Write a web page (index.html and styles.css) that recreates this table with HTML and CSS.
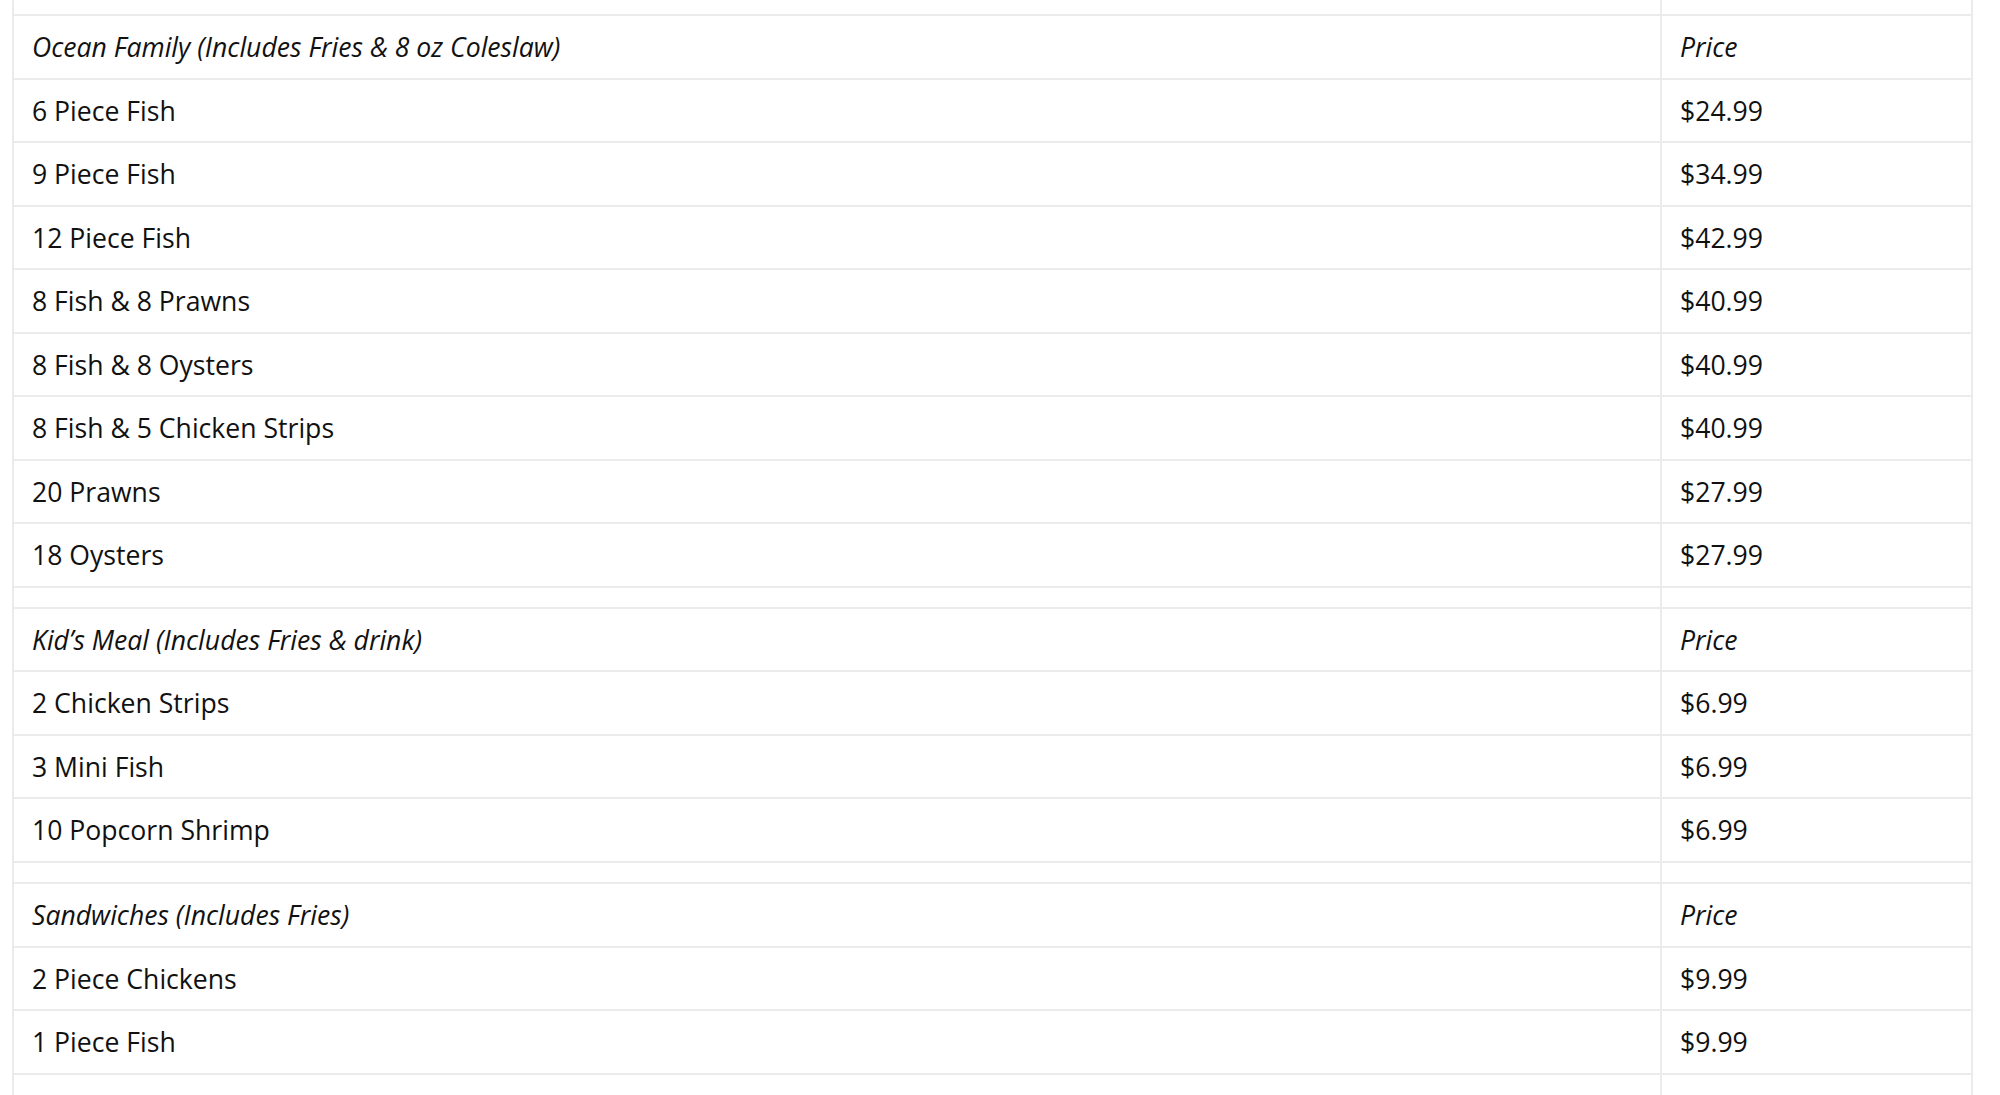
FILE: index.html
```html
<!DOCTYPE html>
<html lang="en">
<head>
<meta charset="utf-8">
<title>Menu</title>
<link rel="stylesheet" href="styles.css">
</head>
<body>
<div class="page">
  <table class="menu">
    <tbody>
      <tr class="row-cut"><td></td><td></td></tr>
      <tr class="row-head"><td>Ocean Family (Includes Fries &amp; 8 oz Coleslaw)</td><td>Price</td></tr>
      <tr><td>6 Piece Fish</td><td>$24.99</td></tr>
      <tr><td>9 Piece Fish</td><td>$34.99</td></tr>
      <tr><td>12 Piece Fish</td><td>$42.99</td></tr>
      <tr><td>8 Fish &amp; 8 Prawns</td><td>$40.99</td></tr>
      <tr><td>8 Fish &amp; 8 Oysters</td><td>$40.99</td></tr>
      <tr><td>8 Fish &amp; 5 Chicken Strips</td><td>$40.99</td></tr>
      <tr><td>20 Prawns</td><td>$27.99</td></tr>
      <tr><td>18 Oysters</td><td>$27.99</td></tr>
      <tr class="row-gap"><td></td><td></td></tr>
      <tr class="row-head"><td>Kid’s Meal (Includes Fries &amp; drink)</td><td>Price</td></tr>
      <tr><td>2 Chicken Strips</td><td>$6.99</td></tr>
      <tr><td>3 Mini Fish</td><td>$6.99</td></tr>
      <tr><td>10 Popcorn Shrimp</td><td>$6.99</td></tr>
      <tr class="row-gap"><td></td><td></td></tr>
      <tr class="row-head"><td>Sandwiches (Includes Fries)</td><td>Price</td></tr>
      <tr><td>2 Piece Chickens</td><td>$9.99</td></tr>
      <tr><td>1 Piece Fish</td><td>$9.99</td></tr>
      <tr><td>&nbsp;</td><td>&nbsp;</td></tr>
    </tbody>
  </table>
</div>
</body>
</html>
```
FILE: styles.css
```css
html, body {
  margin: 0;
  padding: 0;
  background: #ffffff;
}

body {
  font-family: "Open Sans", "Noto Sans", sans-serif;
  color: #111111;
  height: 1095px;
  overflow: hidden;
}

.page {
  padding-left: 12px;
}

.menu {
  border-collapse: separate;
  border-spacing: 0;
  width: 1961px;
  table-layout: fixed;
  font-size: 26.6px;
}

.menu td {
  box-sizing: border-box;
  height: 63.5px;
  padding: 2px 18px 0 18px;
  vertical-align: middle;
  border-bottom: 2px solid #ebebeb;
  border-right: 2px solid #ebebeb;
  white-space: nowrap;
  line-height: 1.4;
}

.menu td:first-child {
  width: 1650px;
  border-left: 2px solid #ebebeb;
}

.menu td:last-child {
  width: 311px;
}

.menu .row-cut td {
  height: 16px;
  padding: 0;
}

.menu .row-gap td {
  height: 21.3px;
  padding: 0;
}

.menu .row-head td {
  font-style: italic;
}
```
